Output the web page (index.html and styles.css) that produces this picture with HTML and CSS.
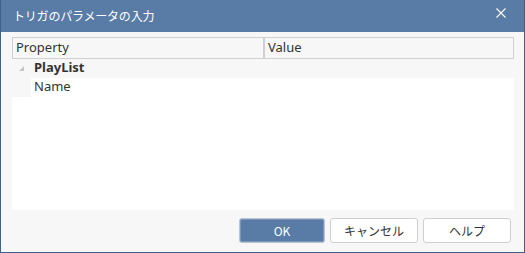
FILE: index.html
```html
<!DOCTYPE html>
<html lang="ja">
<head>
  <meta charset="UTF-8" />
  <title>トリガのパラメータの入力</title>
  <link rel="stylesheet" href="styles.css">
</head>
<body>
  <div class="dialog">
    <div class="titlebar">
      <span class="title">トリガのパラメータの入力</span>
      <svg class="close" width="10" height="10" viewBox="0 0 10 10">
        <path d="M0.5 0.5 L9.5 9.5 M9.5 0.5 L0.5 9.5" stroke="#fff" stroke-width="1.1" fill="none"/>
      </svg>
    </div>

    <div class="content">
      <div class="grid">
        <div class="grid-head">
          <div class="col col-prop">Property</div>
          <div class="col col-value">Value</div>
        </div>
        <div class="row category">
          <div class="margin">
            <svg width="7" height="7" viewBox="0 0 7 7"><path d="M6 1 L6 6 L1 6 Z" fill="#c4c4c4"/></svg>
          </div>
          <div class="label">PlayList</div>
        </div>
        <div class="row item">
          <div class="margin"></div>
          <div class="label">Name</div>
        </div>
      </div>

      <div class="buttons">
        <button class="btn primary">OK</button>
        <button class="btn">キャンセル</button>
        <button class="btn">ヘルプ</button>
      </div>
    </div>
  </div>
</body>
</html>
```

FILE: styles.css
```css
:root {
  --frame: #3d6189;
  --title: #587ca6;
  --client: #f7f7f7;
  --line: #d0d0d0;
  --text: #333;
}

html, body {
  margin: 0;
  padding: 0;
}

body {
  font-family: "Noto Sans", "Noto Sans CJK JP", sans-serif;
  font-size: 12px;
  color: var(--text);
}

.dialog {
  width: 525px;
  height: 253px;
  box-sizing: border-box;
  border: 1px solid var(--frame);
  border-top: none;
  background: var(--client);
  display: flex;
  flex-direction: column;
}

.titlebar {
  height: 30px;
  background: var(--title);
  display: flex;
  align-items: center;
  justify-content: space-between;
  padding: 0 18px 2px 12px;
  color: #fff;
  flex-shrink: 0;
}

.title {
  font-family: "Noto Sans CJK JP", sans-serif;
  font-size: 12px;
  letter-spacing: -0.2px;
}

.close {
  margin-top: -4px;
}

.content {
  flex: 1;
  padding: 5px 10px 0 11px;
  display: flex;
  flex-direction: column;
}

.grid {
  height: 173px;
  background: #fff;
  display: flex;
  flex-direction: column;
}

.grid-head {
  height: 20px;
  display: flex;
  border: 1px solid var(--line);
  background: var(--client);
  font-size: 13px;
}

.col {
  line-height: 19px;
  padding-left: 3px;
}

.col-prop {
  width: 247px;
}

.col-value {
  flex: 1;
  border-left: 2px solid var(--line);
}

.row {
  display: flex;
  height: 19px;
  line-height: 17px;
  font-size: 13px;
}

.margin {
  width: 19px;
  height: 100%;
  background: var(--client);
  display: flex;
  align-items: center;
  justify-content: center;
}

.category {
  background: var(--client);
}

.category .label {
  font-weight: bold;
}

.label {
  padding-left: 3px;
}

.buttons {
  display: flex;
  justify-content: flex-end;
  gap: 5px;
  margin-top: 8px;
  padding-right: 3px;
}

.btn {
  width: 88px;
  height: 25px;
  font-family: "Noto Sans CJK JP", sans-serif;
  font-size: 12px;
  color: var(--text);
  background: #fff;
  border: 1px solid #cfcfcf;
  border-radius: 3px;
  padding: 0;
}

.btn.primary {
  width: 86px;
  background: var(--title);
  color: #fff;
  border-color: #b8c4d2;
  box-shadow: inset 0 0 0 1px #7b97b8;
}
```
